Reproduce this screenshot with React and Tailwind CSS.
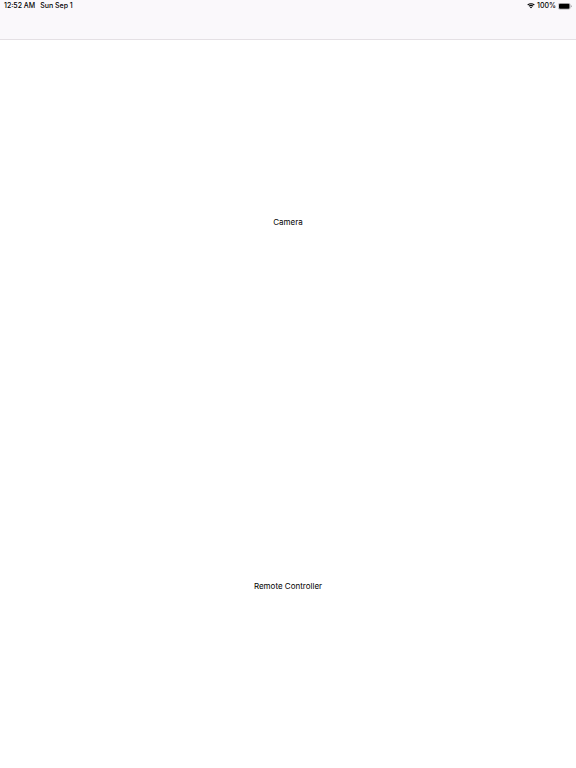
function WifiIcon() {
  return (
    <svg viewBox="0 0 16 12" className="h-[6px] w-[8px]" fill="currentColor" aria-hidden="true">
      <path d="M8 2.400c2.200 0 4.200.9 5.700 2.300.1.100.3.100.4 0l1.100-1.100c.1-.1.1-.3 0-.4a10.400 10.400 0 0 0-14.400 0c-.1.1-.1.300 0 .4l1.100 1.100c.1.100.3.100.4 0A8.300 8.300 0 0 1 8 2.400z" />
      <path d="M8 6c1.200 0 2.300.5 3.200 1.200.1.1.300.1.4 0l1.100-1.100c.1-.1.1-.3 0-.4a6.900 6.900 0 0 0-9.400 0c-.1.1-.1.300 0 .4l1.100 1.100c.1.100.3.100.4 0A4.900 4.900 0 0 1 8 6z" />
      <path d="M10.200 8.600c.1-.1.1-.3 0-.4a3.400 3.400 0 0 0-4.400 0c-.1.100-.1.300 0 .4l2 2.100c.1.1.300.1.400 0z" />
    </svg>
  );
}

function BatteryIcon() {
  return (
    <svg viewBox="0 0 28 14" className="h-[7px] w-[14px]" aria-hidden="true">
      <rect x="0.500" y="0.500" width="24" height="12" rx="3.500" fill="none" stroke="#8e8e93" />
      <rect x="2" y="1.500" width="21" height="10" rx="2" fill="#000" />
      <path d="M26 4.500c1.200.4 1.600 1.200 1.600 2s-.4 1.600-1.600 2z" fill="#8e8e93" />
    </svg>
  );
}

function StatusBar() {
  return (
    <div className="flex h-3 items-center justify-between px-1 text-[7px] leading-3 font-medium">
      <div className="flex gap-[5px]">
        <span>12:52 AM</span>
        <span>Sun Sep 1</span>
      </div>
      <div className="flex items-center gap-0.5">
        <WifiIcon />
        <span>100%</span>
        <BatteryIcon />
      </div>
    </div>
  );
}

export default function App() {
  return (
    <div className="flex min-h-screen flex-col bg-white font-['Inter','Liberation_Sans',sans-serif] text-black">
      <header className="h-10 border-b border-[#e4e0e4] bg-[#faf8fb]">
        <StatusBar />
      </header>
      <main className="grid flex-1 grid-rows-2">
        <button type="button" className="text-[8px] leading-3">
          Camera
        </button>
        <button type="button" className="text-[8px] leading-3">
          Remote Controller
        </button>
      </main>
    </div>
  );
}
